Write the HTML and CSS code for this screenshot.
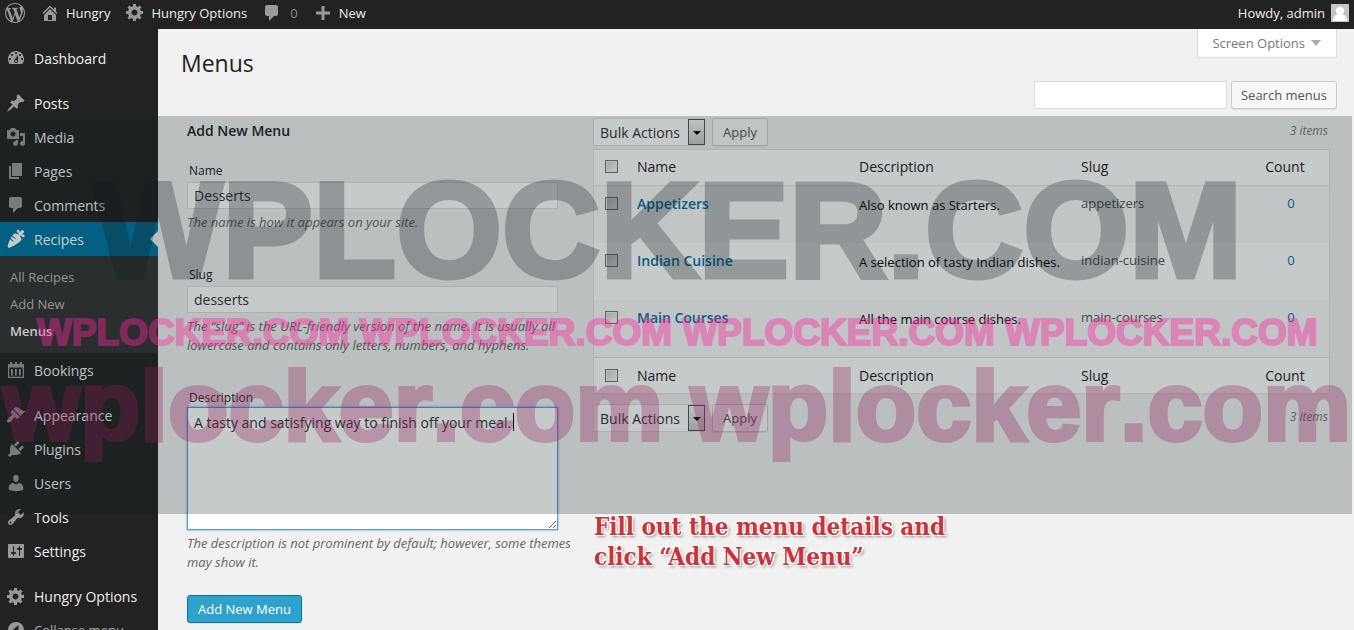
FILE: index.html
```html
<!DOCTYPE html>
<html lang="en">
<head>
<meta charset="utf-8">
<title>Menus</title>
<link rel="stylesheet" href="styles.css">
</head>
<body>
<header class="toolbar">
  <a class="bar-item logo" href="#" aria-label="WordPress"><svg class="icon" viewBox="0 0 20 20"><path d="M20 10c0-5.51-4.49-10-10-10C4.48 0 0 4.49 0 10c0 5.52 4.48 10 10 10 5.51 0 10-4.48 10-10zM7.78 15.37L4.37 6.22c.55-.02 1.17-.08 1.17-.08.5-.06.44-1.13-.06-1.11 0 0-1.45.11-2.37.11-.18 0-.37 0-.58-.01C4.12 2.69 6.87 1.11 10 1.11c2.33 0 4.45.87 6.05 2.34-.68-.11-1.65.39-1.65 1.58 0 .74.45 1.36.9 2.1.35.61.55 1.36.55 2.46 0 1.49-1.4 5-1.4 5l-3.03-8.37c.54-.02.82-.17.82-.17.5-.05.44-1.25-.06-1.22 0 0-1.44.12-2.38.12-.87 0-2.33-.12-2.33-.12-.5-.03-.56 1.2-.06 1.22l.92.08 1.26 3.41zM17.41 10c.24-.64.74-1.87.43-4.25.7 1.29 1.05 2.71 1.05 4.25 0 3.29-1.73 6.24-4.4 7.78.97-2.59 1.94-5.2 2.92-7.78zM6.1 18.09C3.12 16.65 1.11 13.53 1.11 10c0-1.3.23-2.48.72-3.59C3.25 10.3 4.67 14.2 6.1 18.09zm4.03-6.63l2.58 6.98c-.86.29-1.76.45-2.71.45-.79 0-1.57-.11-2.29-.33.81-2.38 1.62-4.74 2.42-7.1z"/></svg></a>
  <a class="bar-item" href="#"><svg class="icon" viewBox="0 0 20 20"><path d="M16 8.500l1.530 1.530-1.060 1.060L10 4.600l-6.470 6.490-1.060-1.060L10 2.500l4 4v-2h2v4zm-6-2.460l6 5.990V18H4v-5.970zM12 17v-5H8v5h4z"/></svg>Hungry</a>
  <a class="bar-item" href="#"><svg class="icon gear" viewBox="0 0 20 20"><path d="M18 12h-2.180c-.17.7-.44 1.350-.81 1.930l1.540 1.540-2.100 2.100-1.540-1.540c-.58.36-1.230.63-1.910.79V19H8v-2.180c-.68-.16-1.330-.43-1.910-.79l-1.540 1.540-2.120-2.120 1.540-1.540c-.36-.58-.63-1.230-.79-1.910H1V9.030h2.170c.16-.7.44-1.350.8-1.940L2.430 5.550l2.100-2.100 1.540 1.540c.58-.37 1.240-.64 1.930-.81V2h3v2.180c.68.16 1.330.43 1.910.79l1.540-1.540 2.120 2.120-1.540 1.540c.36.59.64 1.240.8 1.940H18V12zm-8.500 1.500c1.660 0 3-1.340 3-3s-1.340-3-3-3-3 1.340-3 3 1.340 3 3 3z"/></svg>Hungry Options</a>
  <a class="bar-item muted" href="#"><svg class="icon" viewBox="0 0 20 20"><path d="M5 2h9c1.100 0 2 .9 2 2v7c0 1.100-.9 2-2 2h-2l-5 5v-5H5c-1.100 0-2-.9-2-2V4c0-1.100.9-2 2-2z"/></svg>0</a>
  <a class="bar-item" href="#"><svg class="icon" viewBox="0 0 20 20"><path d="M17 8.500v3h-5.500V17h-3v-5.500H3v-3h5.500V3h3v5.500H17z"/></svg>New</a>
  <a class="bar-item account" href="#">Howdy, admin<svg class="avatar" viewBox="0 0 18 18"><rect width="18" height="18" fill="#c5c5c5"/><circle cx="9" cy="7" r="4.200" fill="#fff"/><path d="M2 17c0-4 2-6 4.500-6.500h5C14 11 16 13 16 17z" fill="#fff"/></svg></a>
</header>
<div class="shell">
  <nav class="sidebar">
    <a class="nav-item" href="#"><svg class="icon" viewBox="0 0 20 20"><path d="M3.760 16h12.480c1.100-1.370 1.760-3.110 1.760-5 0-4.420-3.580-8-8-8s-8 3.580-8 8c0 1.890.66 3.630 1.760 5zM10 4c.55 0 1 .45 1 1s-.45 1-1 1-1-.45-1-1 .45-1 1-1zM6 6c.55 0 1 .45 1 1s-.45 1-1 1-1-.45-1-1 .45-1 1-1zm8 0c.55 0 1 .45 1 1s-.45 1-1 1-1-.45-1-1 .45-1 1-1zm-5.370 5.550L12 7v6c0 1.100-.9 2-2 2s-2-.9-2-2c0-.57.24-1.080.63-1.450zM4 10c.55 0 1 .45 1 1s-.45 1-1 1-1-.45-1-1 .45-1 1-1zm12 0c.55 0 1 .45 1 1s-.45 1-1 1-1-.45-1-1 .45-1 1-1zm-5 3c0-.55-.45-1-1-1s-1 .45-1 1 .45 1 1 1 1-.45 1-1z"/></svg>Dashboard</a>
    <a class="nav-item spaced" href="#"><svg class="icon" viewBox="0 0 20 20"><path d="M10.440 3.020l1.820-1.820 6.360 6.350-1.830 1.820c-1.050-.68-2.480-.57-3.410.36l-.75.75c-.92.93-1.040 2.350-.35 3.410l-1.830 1.820-2.410-2.410-2.800 2.790c-.42.42-3.380 2.710-3.800 2.290s1.860-3.390 2.280-3.810l2.790-2.790L4.100 9.360l1.830-1.820c1.050.69 2.480.57 3.400-.36l.75-.75c.93-.92 1.050-2.350.36-3.410z"/></svg>Posts</a>
    <a class="nav-item" href="#"><svg class="icon" viewBox="0 0 20 20"><path d="M13 11V4c0-.55-.45-1-1-1h-1.670L9 1H5L3.670 3H2c-.55 0-1 .45-1 1v7c0 .55.45 1 1 1h10c.55 0 1-.45 1-1zM7 4.500c1.380 0 2.500 1.120 2.500 2.500S8.380 9.500 7 9.500 4.500 8.380 4.500 7 5.620 4.500 7 4.500zM14 6h5v10.500c0 1.380-1.120 2.500-2.500 2.500S14 17.880 14 16.500s1.120-2.500 2.500-2.500c.17 0 .34.02.5.05V9h-3V6zm-4 8.050V13h2v3.500c0 1.380-1.120 2.500-2.500 2.500S7 17.880 7 16.500 8.120 14 9.500 14c.17 0 .34.02.5.05z"/></svg>Media</a>
    <a class="nav-item" href="#"><svg class="icon" viewBox="0 0 20 20"><path d="M6 15V2h10v13H6zm-1 1h8v2H3V5h2v11z"/></svg>Pages</a>
    <a class="nav-item" href="#"><svg class="icon" viewBox="0 0 20 20"><path d="M5 2h9c1.100 0 2 .9 2 2v7c0 1.100-.9 2-2 2h-2l-5 5v-5H5c-1.100 0-2-.9-2-2V4c0-1.100.9-2 2-2z"/></svg>Comments</a>
    <a class="nav-item current" href="#"><svg class="icon" viewBox="0 0 20 20"><path d="M2 18.430c1.510 1.360 11.640-4.670 13.140-7.210.72-1.220-.13-3.010-1.520-4.440C15.200 5.730 16.590 9 17.910 8.310c.6-.32.99-1.310.7-1.920-.52-1.080-2.250-1.080-3.420-1.210.83-.2 2.820-1.050 2.860-2.250.04-.92-1.130-1.970-2.050-1.860-1.210.14-1.650 1.880-2.060 3-.05-.71-.2-2.270-.98-2.950-1.040-.91-2.290-.05-2.320 1.050-.04 1.330 2.820 2.070 1.920 3.670C11.040 4.670 9.250 4.030 8.100 4.700c-.49.31-1.050.91-1.630 1.690.89.94 2.120 2.070 3.090 2.720.2.14.26.42.11.62-.14.21-.42.26-.62.12-.99-.67-2.200-1.780-3.100-2.710-.45.67-.91 1.430-1.340 2.230.85.86 1.930 1.830 2.790 2.410.2.14.25.42.11.62-.14.21-.42.26-.63.12-.85-.58-1.860-1.480-2.710-2.320C2.400 13.690 1.100 17.630 2 18.430z"/></svg>Recipes</a>
    <div class="submenu">
      <a class="sub-item" href="#">All Recipes</a>
      <a class="sub-item" href="#">Add New</a>
      <a class="sub-item active" href="#">Menus</a>
    </div>
    <a class="nav-item" href="#"><svg class="icon" viewBox="0 0 20 20"><path fill-rule="evenodd" d="M2 4h2V2h2v2h3V2h2v2h3V2h2v2h2v14H2zM3.200 7.500v9.300h13.600V7.500zM5 9h1.800v6.500H5zM9 9h1.800v6.500H9zM13 9h1.800v6.500H13z"/></svg>Bookings</a>
    <a class="nav-item spaced" href="#"><svg class="icon" viewBox="0 0 20 20"><path d="M14.480 11.060L7.410 3.990l1.500-1.500c.5-.56 2.300-.47 3.510.32 1.210.8 1.430 1.280 2.910 2.100 1.180.64 2.450 1.260 4.450.85zm-.71.71L6.700 4.700 4.930 6.470c-.39.39-.39 1.020 0 1.410l1.060 1.060c.39.39.39 1.030 0 1.420-.6.6-1.430 1.110-2.210 1.690-.35.26-.7.53-1.010.84C1.430 14.230.4 16.080 1.400 17.070c.99 1 2.840-.03 4.180-1.360.31-.31.58-.66.85-1.020.57-.78 1.080-1.610 1.690-2.210.39-.39 1.020-.39 1.410 0l1.060 1.060c.39.39 1.020.39 1.410 0z"/></svg>Appearance</a>
    <a class="nav-item" href="#"><svg class="icon" viewBox="0 0 20 20"><path d="M13.110 4.360L9.870 7.600 8 5.730l3.240-3.240c.35-.34 1.050-.2 1.560.32.52.51.66 1.210.31 1.550zm-8 1.770l.91-1.120 9.010 9.010-1.190.84c-.71.71-2.630 1.160-3.820 1.160H6.140L4.900 17.260c-.59.59-1.540.59-2.120 0-.59-.58-.59-1.530 0-2.120l1.240-1.240v-3.880c0-1.130.4-3.190 1.090-3.890zm7.260 3.970l3.240-3.240c.34-.35 1.040-.21 1.550.31.52.51.66 1.210.31 1.550l-3.240 3.250z"/></svg>Plugins</a>
    <a class="nav-item" href="#"><svg class="icon" viewBox="0 0 20 20"><path d="M10 9.250c-2.270 0-2.730-3.440-2.730-3.440C7 4.020 7.820 2 9.970 2c2.160 0 2.980 2.020 2.710 3.810 0 0-.41 3.440-2.680 3.440zm0 2.570L12.720 10c2.390 0 4.520 2.330 4.520 4.530v2.490s-3.650 1.130-7.240 1.130c-3.650 0-7.240-1.130-7.240-1.130v-2.490c0-2.250 1.940-4.480 4.470-4.480z"/></svg>Users</a>
    <a class="nav-item" href="#"><svg class="icon" viewBox="0 0 20 20"><path d="M16.680 9.770c-1.340 1.340-3.300 1.670-4.950.99l-5.410 6.520c-.99.99-2.590.99-3.580 0s-.99-2.590 0-3.570l6.520-5.420c-.68-1.650-.35-3.610.99-4.950 1.280-1.280 3.120-1.620 4.720-1.060l-2.890 2.890 2.820 2.820 2.860-2.870c.53 1.580.18 3.390-1.080 4.650zM3.810 16.210c.4.39 1.040.39 1.430 0 .4-.4.4-1.040 0-1.430-.39-.4-1.030-.4-1.430 0-.39.39-.39 1.030 0 1.430z"/></svg>Tools</a>
    <a class="nav-item" href="#"><svg class="icon" viewBox="0 0 20 20"><path d="M18 16V4c0-.55-.45-1-1-1H3c-.55 0-1 .45-1 1v12c0 .55.45 1 1 1h14c.55 0 1-.45 1-1zM8 11h1c.55 0 1 .45 1 1s-.45 1-1 1H8v1.500c0 .28-.22.5-.5.5s-.5-.22-.5-.5V13H6c-.55 0-1-.45-1-1s.45-1 1-1h1V5.500c0-.28.22-.5.5-.5s.5.22.5.5V11zm5-2h-1c-.55 0-1-.45-1-1s.45-1 1-1h1V5.500c0-.28.22-.5.5-.5s.5.22.5.5V7h1c.55 0 1 .45 1 1s-.45 1-1 1h-1v5.500c0 .28-.22.5-.5.5s-.5-.22-.5-.5V9z"/></svg>Settings</a>
    <a class="nav-item spaced" href="#"><svg class="icon" viewBox="0 0 20 20"><path d="M18 12h-2.180c-.17.7-.44 1.350-.81 1.930l1.540 1.540-2.100 2.100-1.540-1.540c-.58.36-1.230.63-1.910.79V19H8v-2.180c-.68-.16-1.330-.43-1.910-.79l-1.540 1.540-2.120-2.120 1.540-1.540c-.36-.58-.63-1.230-.79-1.910H1V9.030h2.170c.16-.7.44-1.350.8-1.940L2.430 5.550l2.100-2.100 1.540 1.540c.58-.37 1.240-.64 1.930-.81V2h3v2.180c.68.16 1.330.43 1.910.79l1.540-1.540 2.120 2.120-1.540 1.540c.36.59.64 1.240.8 1.940H18V12zm-8.500 1.500c1.660 0 3-1.340 3-3s-1.340-3-3-3-3 1.340-3 3 1.340 3 3 3z"/></svg>Hungry Options</a>
    <button class="nav-item collapse" type="button"><svg class="icon" viewBox="0 0 20 20"><path fill-rule="evenodd" d="M10 2a8 8 0 1 0 0 16 8 8 0 0 0 0-16zM12.500 5v10L6.500 10z"/></svg>Collapse menu</button>
  </nav>
  <main class="content">
    <div class="page-head">
      <h1>Menus</h1>
      <button class="screen-options" type="button">Screen Options<span class="caret"></span></button>
    </div>
    <form class="search">
      <input class="text-input search-input" type="search" aria-label="Search menus">
      <button class="button" type="button">Search menus</button>
    </form>
    <div class="columns">
      <form class="add-form">
        <h2>Add New Menu</h2>
        <div class="field">
          <label for="name">Name</label>
          <input class="text-input" id="name" type="text" value="Desserts">
          <p class="hint">The name is how it appears on your site.</p>
        </div>
        <div class="field">
          <label for="slug">Slug</label>
          <input class="text-input" id="slug" type="text" value="desserts">
          <p class="hint">The “slug” is the URL-friendly version of the name. It is usually all lowercase and contains only letters, numbers, and hyphens.</p>
        </div>
        <div class="field">
          <label for="description">Description</label>
          <div class="area">
            <textarea class="text-input" id="description">A tasty and satisfying way to finish off your meal.</textarea>
            <span class="text-cursor"></span>
          </div>
          <p class="hint">The description is not prominent by default; however, some themes may show it.</p>
        </div>
        <button class="button primary" type="button">Add New Menu</button>
      </form>
      <section class="list">
        <div class="list-nav">
          <span class="select"><select aria-label="Bulk Actions"><option>Bulk Actions</option></select><span class="select-arrow"></span></span>
          <button class="button" type="button">Apply</button>
          <span class="total">3 items</span>
        </div>
        <table>
          <thead>
            <tr><th class="check"><input type="checkbox" aria-label="Select all"></th><th class="name">Name</th><th class="desc">Description</th><th class="slug">Slug</th><th class="count">Count</th></tr>
          </thead>
          <tbody>
            <tr><td class="check"><input type="checkbox" aria-label="Select Appetizers"></td><td class="name"><a href="#">Appetizers</a></td><td class="desc">Also known as Starters.</td><td class="slug">appetizers</td><td class="count"><a href="#">0</a></td></tr>
            <tr><td class="check"><input type="checkbox" aria-label="Select Indian Cuisine"></td><td class="name"><a href="#">Indian Cuisine</a></td><td class="desc">A selection of tasty Indian dishes.</td><td class="slug">indian-cuisine</td><td class="count"><a href="#">0</a></td></tr>
            <tr><td class="check"><input type="checkbox" aria-label="Select Main Courses"></td><td class="name"><a href="#">Main Courses</a></td><td class="desc">All the main course dishes.</td><td class="slug">main-courses</td><td class="count"><a href="#">0</a></td></tr>
          </tbody>
          <tfoot>
            <tr><th class="check"><input type="checkbox" aria-label="Select all"></th><th class="name">Name</th><th class="desc">Description</th><th class="slug">Slug</th><th class="count">Count</th></tr>
          </tfoot>
        </table>
        <div class="list-nav bottom">
          <span class="select"><select aria-label="Bulk Actions"><option>Bulk Actions</option></select><span class="select-arrow"></span></span>
          <button class="button" type="button">Apply</button>
          <span class="total">3 items</span>
        </div>
      </section>
    </div>
  </main>
</div>
<p class="annotation">Fill out the menu details and<br>click “Add New Menu”</p>
<div class="watermark">
  <p class="mark mark-grey">WPLOCKER.COM</p>
  <p class="mark mark-pink">WPLOCKER.COM WPLOCKER.COM WPLOCKER.COM WPLOCKER.COM</p>
  <p class="mark mark-plum">wplocker.com wplocker.com</p>
</div>
</body>
</html>
```
FILE: styles.css
```css
* { box-sizing: border-box; }
body {
  margin: 0;
  height: 100vh;
  overflow: hidden;
  position: relative;
  display: flex;
  flex-direction: column;
  background: #f1f1f1;
  color: #222;
  font: 13px/19px "Open Sans", sans-serif;
}
h1, h2, p { margin: 0; font-weight: 400; }
a { color: #0074a2; text-decoration: none; }
button, input, select, textarea { font: inherit; margin: 0; }
.icon { width: 20px; height: 20px; flex: none; fill: #999; }

.toolbar {
  flex: none;
  display: flex;
  align-items: flex-start;
  height: 29px;
  padding: 0 5px;
  background: #222;
}
.bar-item {
  display: flex;
  align-items: center;
  gap: 6px;
  height: 26px;
  margin-right: 15px;
  color: #eee;
}
.bar-item .gear { align-self: flex-start; margin-top: 2px; }
.bar-item.muted { gap: 8px; color: #888; }
.bar-item.account { margin: 0 0 0 auto; }
.avatar { width: 18px; height: 18px; }

.shell { flex: 1; min-height: 0; display: flex; }
.sidebar {
  flex: none;
  width: 158px;
  display: flex;
  flex-direction: column;
  padding-top: 12px;
  background: #222;
}
.nav-item {
  position: relative;
  flex: none;
  display: flex;
  align-items: center;
  gap: 8px;
  height: 34px;
  padding: 0 6px;
  color: #eee;
  font-size: 14px;
}
.nav-item.spaced { margin-top: 11px; }
.nav-item.current { background: #0074a2; color: #fff; }
.nav-item.current .icon { fill: #fff; }
.nav-item.current::after {
  content: "";
  position: absolute;
  right: 0;
  top: 9px;
  border: 8px solid transparent;
  border-right-color: #f1f1f1;
  border-left: 0;
}
.nav-item.collapse { border: 0; background: none; color: #aaa; font-size: 13px; }
.submenu { display: flex; flex-direction: column; padding: 8px 10px; background: #333; }
.sub-item { color: #bbb; line-height: 27px; }
.sub-item.active { color: #fff; font-weight: 600; }

.content { flex: 1; min-width: 0; padding: 0 17px 0 23px; }
.page-head { display: flex; justify-content: space-between; align-items: flex-start; height: 52px; }
h1 { padding-top: 18px; font-size: 23px; line-height: 32px; }
.screen-options {
  display: flex;
  align-items: center;
  gap: 6px;
  height: 29px;
  padding: 0 15px 0 14px;
  border: 1px solid #ddd;
  border-top: 0;
  background: #fff;
  color: #777;
}
.caret { border: 5px solid transparent; border-top: 6px solid #aaa; border-bottom: 0; }
.search { display: flex; justify-content: flex-end; gap: 4px; }
.text-input {
  display: block;
  width: 100%;
  height: 27px;
  padding: 2px 6px;
  border: 1px solid #ddd;
  border-radius: 0;
  background: #fff;
  color: #333;
  font-size: 14px;
  outline: none;
}
.search-input { width: 193px; height: 28px; }
.button {
  height: 28px;
  padding: 0 10px;
  border: 1px solid #ccc;
  border-radius: 3px;
  background: #f7f7f7;
  box-shadow: 0 1px 0 rgba(0, 0, 0, .08);
  color: #555;
}
.search .button { padding: 0 9px; }
.button.primary { border-color: #0074a2; background: #2ea2cc; color: #fff; }

.columns {
  display: grid;
  grid-template-columns: minmax(0, 380px) minmax(0, 1fr);
  gap: 26px;
  padding: 9px 7px 0 6px;
}
.add-form { display: flex; flex-direction: column; align-items: flex-start; }
h2 { padding: 3px 0 22px; font-size: 14px; font-weight: 600; line-height: 19px; }
.field { width: 100%; margin-bottom: 34px; }
.field label { display: block; padding: 0 2px; margin-bottom: 2px; font-size: 12px; line-height: 18px; }
.field .text-input { width: 371px; max-width: 100%; }
.hint { margin: 4px -14px 0 0; color: #666; font-style: italic; }
.area { position: relative; margin-top: -2px; }
.field textarea.text-input {
  height: 123px;
  padding: 5px 6px;
  border-color: #5b9dd9;
  box-shadow: 0 0 2px rgba(30, 140, 190, .8);
  line-height: 20px;
}
.text-cursor { position: absolute; left: 326px; top: 6px; width: 1px; height: 18px; background: #000; }
.field:last-of-type { margin-bottom: 23px; }

.list-nav { display: flex; align-items: center; height: 28px; }
.list-nav.bottom { margin-top: 10px; }
.select { position: relative; display: block; margin-right: 7px; }
.select select {
  appearance: none;
  display: block;
  width: 112px;
  height: 28px;
  padding: 0 6px;
  border: 1px solid #ddd;
  border-radius: 0;
  background: #fff;
  color: #333;
  font-size: 14px;
}
.select-arrow {
  position: absolute;
  top: 1px;
  right: 0;
  width: 17px;
  height: 26px;
  border: 1px solid #555;
  background: linear-gradient(#f4f4f4, #c8c8c8);
  pointer-events: none;
}
.select-arrow::after {
  content: "";
  position: absolute;
  left: 4px;
  top: 11px;
  border: 4px solid transparent;
  border-top-color: #000;
  border-bottom: 0;
}
.total { align-self: flex-start; margin: 3px 0 0 auto; padding-right: 2px; color: #777; font-size: 12px; font-style: italic; }
table {
  width: 100%;
  margin-top: 3px;
  table-layout: fixed;
  border: 1px solid #e1e1e1;
  border-collapse: separate;
  border-spacing: 0;
  background: #fff;
}
th, td { padding: 0; text-align: left; font-weight: 400; vertical-align: middle; }
th { height: 36px; font-size: 14px; }
thead th { padding-bottom: 2px; border-bottom: 1px solid #e1e1e1; }
tfoot th { border-top: 1px solid #e1e1e1; }
td { height: 57px; padding-top: 8px; vertical-align: top; }
td.name { font-size: 14px; font-weight: 600; }
td.desc { padding-top: 10px; color: #000; }
td.slug { color: #555; }
tbody tr:nth-child(odd) { background: #f9f9f9; }
.check { width: 43px; padding-left: 11px; }
.name, .desc { width: 222px; }
.count { width: 88px; text-align: center; }
td.count { padding-right: 0; padding-left: 12px; }
input[type="checkbox"] {
  appearance: none;
  display: block;
  width: 13px;
  height: 13px;
  border: 1px solid #777;
  background: linear-gradient(135deg, #ccc, #fff);
  box-shadow: inset 0 0 0 1px #eee;
}
td input[type="checkbox"] { margin-top: 3px; }

.annotation {
  position: absolute;
  left: 594px;
  top: 512px;
  color: #c9333a;
  font: 700 24px/30px "DejaVu Serif Condensed", "DejaVu Serif", serif;
  text-shadow: 1px 1px 0 #fff, -1px -1px 0 #fff, 1px -1px 0 #fff, -1px 1px 0 #fff, 2px 2px 3px rgba(0, 0, 0, .4);
}

.watermark {
  position: absolute;
  inset: 116px 2px auto 0;
  height: 398px;
  background: rgba(18, 32, 32, .24);
  pointer-events: none;
}
.mark {
  position: absolute;
  white-space: nowrap;
  font-family: "Liberation Sans", sans-serif;
  font-weight: 700;
  font-kerning: none;
  line-height: 1;
}
.mark-grey { left: 94px; top: 46px; color: #101c22; opacity: .27; font-size: 136px; -webkit-text-stroke: 5px #101c22; }
.mark-pink { left: 37px; top: 198px; color: #ff28a0; opacity: .4; font-size: 37px; -webkit-text-stroke: 2px #ff28a0; }
.mark-plum { left: 3px; top: 240px; color: #961e5f; opacity: .3; font-size: 99px; -webkit-text-stroke: 4px #961e5f; }
```
